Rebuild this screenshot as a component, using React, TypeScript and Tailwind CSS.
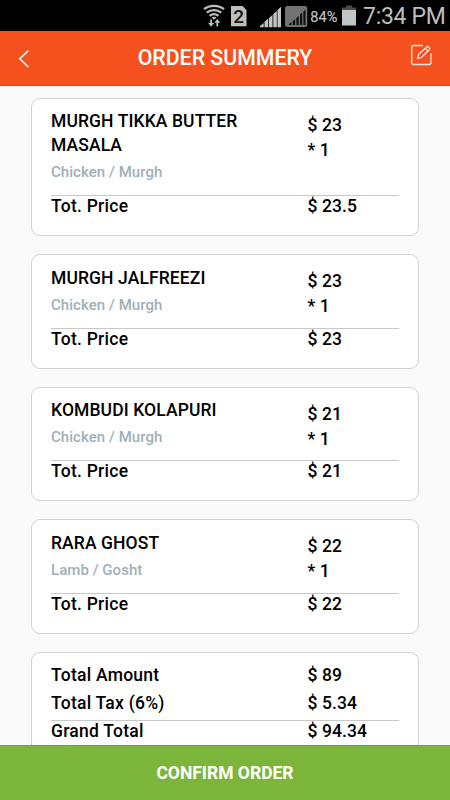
import type { ReactNode } from "react";

type Item = { name: string[]; category: string; price: string; qty: string; total: string };

const items: Item[] = [
  { name: ["MURGH TIKKA BUTTER", "MASALA"], category: "Chicken / Murgh", price: "$ 23", qty: "* 1", total: "$ 23.5" },
  { name: ["MURGH JALFREEZI"], category: "Chicken / Murgh", price: "$ 23", qty: "* 1", total: "$ 23" },
  { name: ["KOMBUDI KOLAPURI"], category: "Chicken / Murgh", price: "$ 21", qty: "* 1", total: "$ 21" },
  { name: ["RARA GHOST"], category: "Lamb / Gosht", price: "$ 22", qty: "* 1", total: "$ 22" },
];

function StatusBar() {
  return (
    <div className="flex h-[31px] shrink-0 items-start justify-end bg-black pr-[5px] text-[#bebebe]">
      <svg width="156" height="31" viewBox="200 0 156 31" className="shrink-0">
        <g fill="none" stroke="#bebebe" strokeWidth="2.2">
          <path d="M204 9.2c5.500-4.500 14.500-4.500 20 0" />
          <path d="M206.800 12.600c4-3.300 10.400-3.300 14.400 0" />
          <path d="M209.600 15.800c2.600-2.100 6.200-2.100 8.800 0" />
        </g>
        <path d="M211.500 17.600c1.500-1.200 3.500-1.200 5 0l-2.500 2.200z" fill="#bebebe" />
        <g fill="#bebebe">
          <path d="M210.200 19.500h1.800v3.500h2.100l-3 3.800-3-3.800h2.100z" />
          <path d="M216.400 26.500h1.800v-3.700h2.100l-3-3.800-3 3.800h2.100z" />
          <path d="M231 6h11.500l4 4v16.200H231z" />
        </g>
        <text x="238.600" y="23" textAnchor="middle" fill="#111" fontSize="19" fontWeight="500" fontFamily="Roboto, sans-serif">2</text>
        <g fill="#c4c4c4">
          <path d="M260 27.300v-1.300l3.700-3v4.300z" />
          <path d="M264.500 27.300v-5.500l3.700-3.200v8.700z" />
          <path d="M269 27.300V18l3.500-3v12.300z" />
          <path d="M273.300 27.300V14l3.500-3v16.300z" />
          <path d="M277.500 27.300V10l3.500-3.200v20.500z" />
        </g>
        <rect x="285" y="6" width="22.300" height="21" rx="2.500" fill="#737373" />
        <g fill="#101010">
          <path d="M289 25v-1l2.500-2v3z" />
          <path d="M292.800 25v-4l2.300-2v6z" />
          <path d="M296.400 25v-7l2.300-2v9z" />
          <path d="M300 25V14.500l2.200-2V25z" />
          <path d="M303.400 25V11.500l2.100-2V25z" />
        </g>
        <text x="310.300" y="22" fill="#bebebe" stroke="#bebebe" strokeWidth="0.2" fontSize="15.500" textLength="27" lengthAdjust="spacingAndGlyphs" fontFamily="Roboto, sans-serif">84%</text>
        <path d="M346 5.500h6v2h4V11h-14V7.500h4z" fill="#4b4b4b" />
        <path d="M342 10h14v15.500h-14z" fill="#c4c4c4" />
      </svg>
      <span className="ml-[7px] w-[82px] whitespace-nowrap text-[23px] leading-[33px] tracking-[-0.3px]">7:34 PM</span>
    </div>
  );
}

function Header() {
  return (
    <header className="flex h-[55px] shrink-0 items-start justify-between border-b border-[#e84312] bg-[#f5511e] text-white">
      <svg width="50" height="54" viewBox="0 0 50 54" fill="none" stroke="white" strokeWidth="1.6">
        <path d="M28.300 19.700 19.800 27.700l8.500 8.300" />
      </svg>
      <h1 className="pt-[15px] text-[21.300px] font-medium leading-[24px]">ORDER SUMMERY</h1>
      <svg width="50" height="54" viewBox="400 31 50 54" fill="none" stroke="#ffe6df" strokeWidth="1.3" strokeLinecap="round" strokeLinejoin="round">
        <path d="M422.500 45.500H413.500Q411.700 45.500 411.700 47.300V62.700Q411.700 64.500 413.500 64.500H429Q431 64.500 431 62.700V54" />
        <path d="M417.500 58.500 418.700 54.200 426.700 46.900C428.200 45.700 430.700 48.200 429.300 49.800L421.600 57.300Z M425.200 48.300l2.800 2.800" />
      </svg>
    </header>
  );
}

function Card({ children, className }: { children: ReactNode; className: string }) {
  return <section className={`shrink-0 rounded-[9px] border border-[#d3d3d3] bg-white px-[19px] ${className}`}>{children}</section>;
}

function Row({ label, value, className }: { label: string; value: string; className: string }) {
  return (
    <div className={`flex leading-[20px] ${className}`}>
      <span className="w-[256.500px] tracking-[0.250px]">{label}</span>
      <span>{value}</span>
    </div>
  );
}

export default function App() {
  return (
    <div className="flex h-[800px] w-[450px] flex-col overflow-hidden bg-[#fafafa] font-['Roboto',sans-serif]">
      <StatusBar />
      <Header />
      <main className="flex min-h-0 flex-1 flex-col gap-[18px] overflow-hidden px-[31px] pt-[11.500px] text-[17.500px] font-medium tracking-[0.100px] text-black">
        {items.map((item) => (
          <Card key={item.name[0]} className={item.name.length > 1 ? "h-[138.500px]" : "h-[114.500px]"}>
            <div className={`flex border-b border-[#c8c8c8] pt-[10.700px] ${item.name.length > 1 ? "h-[97.500px]" : "h-[73.500px]"}`}>
              <div className="w-[256.500px]">
                {item.name.map((line) => (
                  <div key={line} className="whitespace-nowrap leading-[24px]">{line}</div>
                ))}
                <div className="pt-[3px] text-[15px] leading-[24px] tracking-[0.050px] text-[#9fb0b9]">{item.category}</div>
              </div>
              <div className="pt-[3.500px] leading-[25px]">
                <div>{item.price}</div>
                <div>{item.qty}</div>
              </div>
            </div>
            <Row label="Tot. Price" value={item.total} className="pt-[0.300px]" />
          </Card>
        ))}
        <Card className="h-[120px]">
          <div className="h-[68px] border-b border-[#c8c8c8] pt-[12px]">
            <Row label="Total Amount" value="$ 89" className="h-[28px]" />
            <Row label="Total Tax (6%)" value="$ 5.34" className="" />
          </div>
          <Row label="Grand Total" value="$ 94.34" className="" />
        </Card>
      </main>
      <button className="h-[55px] shrink-0 border-t border-[#6ca52e] bg-[#7bb53a] pt-px text-[17.500px] font-bold text-white">CONFIRM ORDER</button>
    </div>
  );
}
